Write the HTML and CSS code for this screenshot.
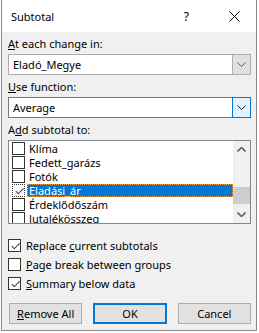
FILE: index.html
```html
<!DOCTYPE html>
<html lang="hu">
<head>
    <meta charset="UTF-8">
    <title>Subtotal</title>
    <link rel="stylesheet" href="styles.css">
</head>
<body>
    <div class="dialog">
        <div class="titlebar">
            <span class="title">Subtotal</span>
            <span class="help">?</span>
            <svg class="close" width="11" height="11" viewBox="0 0 11 11">
                <path d="M0.5 0.5 L10.5 10.5 M10.5 0.5 L0.5 10.5" stroke="#000" stroke-width="1" fill="none"/>
            </svg>
        </div>
        <div class="content">
            <div class="label"><u>A</u>t each change in:</div>
            <div class="combo disabled">
                <span class="value">Eladó_Megye</span>
                <span class="arrow">
                    <svg width="9" height="5" viewBox="0 0 9 5"><path d="M0.5 0.5 L4.5 4.5 L8.5 0.5" stroke="#555" fill="none"/></svg>
                </span>
            </div>

            <div class="label"><u>U</u>se function:</div>
            <div class="combo focused">
                <span class="value">Average</span>
                <span class="arrow">
                    <svg width="9" height="5" viewBox="0 0 9 5"><path d="M0.5 0.5 L4.5 4.5 L8.5 0.5" stroke="#222" fill="none"/></svg>
                </span>
            </div>

            <div class="label">A<u>d</u>d subtotal to:</div>
            <div class="listbox">
                <div class="rows">
                    <div class="row"><span class="box"></span><span class="txt">Klíma</span></div>
                    <div class="row"><span class="box"></span><span class="txt">Fedett_garázs</span></div>
                    <div class="row"><span class="box"></span><span class="txt">Fotók</span></div>
                    <div class="row"><span class="box checked dotted"></span><span class="txt sel">Eladási_ár</span></div>
                    <div class="row"><span class="box"></span><span class="txt">Érdeklődőszám</span></div>
                    <div class="row"><span class="box"></span><span class="txt">Jutalékösszeg</span></div>
                </div>
                <div class="scrollbar">
                    <svg class="sb-arrow" width="9" height="5" viewBox="0 0 9 5"><path d="M0.5 4.5 L4.5 0.5 L8.5 4.5" stroke="#606060" stroke-width="1.6" fill="none"/></svg>
                    <div class="track"><div class="thumb"></div></div>
                    <svg class="sb-arrow" width="9" height="5" viewBox="0 0 9 5"><path d="M0.5 0.5 L4.5 4.5 L8.5 0.5" stroke="#606060" stroke-width="1.6" fill="none"/></svg>
                </div>
            </div>

            <div class="options">
                <div class="option"><span class="box checked"></span><span>Replace <u>c</u>urrent subtotals</span></div>
                <div class="option"><span class="box"></span><span><u>P</u>age break between groups</span></div>
                <div class="option"><span class="box checked"></span><span><u>S</u>ummary below data</span></div>
            </div>

            <div class="buttons">
                <button class="btn"><u>R</u>emove All</button>
                <button class="btn default">OK</button>
                <button class="btn">Cancel</button>
            </div>
        </div>
    </div>
</body>
</html>
```

FILE: styles.css
```css
body {
    margin: 0;
    background: #ffffff;
    font-family: "Noto Sans", "Open Sans", sans-serif;
    font-size: 11px;
    color: #000;
}
.dialog {
    margin-left: 1px;
    width: 254px;
    height: 330px;
    border: 1px solid #8a8a8a;
    border-top: none;
    background: #f0f0f0;
    display: flex;
    flex-direction: column;
}
.titlebar {
    height: 32px;
    background: #ffffff;
    display: flex;
    align-items: center;
    padding-left: 9px;
    padding-right: 16px;
}
.title {
    flex: 1;
}
.help {
    font-size: 12px;
    margin-right: 40px;
}
.close {
    margin-top: 1px;
}
.content {
    padding: 4px 5px 0 6px;
    display: flex;
    flex-direction: column;
}
.label {
    height: 16px;
    line-height: 16px;
    margin-bottom: 2px;
}
.combo {
    height: 19px;
    border: 1px solid #7a7a7a;
    background: #fff;
    display: flex;
    align-items: stretch;
    margin-bottom: 4px;
}
.combo .value {
    flex: 1;
    line-height: 19px;
    padding-left: 4px;
}
.combo .arrow {
    width: 17px;
    display: flex;
    align-items: center;
    justify-content: center;
}
.combo.disabled {
    border-color: #adadad;
}
.combo.disabled .arrow {
    background: #e0e0e0;
    border-left: 1px solid #adadad;
}
.combo.focused .arrow {
    background: #e5f1fb;
    border: 1px solid #0078d7;
    margin: -1px -1px -1px 0;
}
.listbox {
    height: 82px;
    border: 1px solid #828790;
    background: #fff;
    display: flex;
    overflow: hidden;
}
.rows {
    flex: 1;
}
.row {
    height: 14px;
    display: flex;
    align-items: center;
    padding-left: 3px;
    white-space: nowrap;
}
.txt {
    line-height: 13px;
    height: 13px;
    padding-left: 2px;
}
.box {
    width: 11px;
    height: 11px;
    border: 1px solid #333;
    background: #fff;
    margin-right: 2px;
    flex-shrink: 0;
    position: relative;
}
.box.checked::after {
    content: "";
    position: absolute;
    left: 2px;
    top: 1px;
    width: 7px;
    height: 3px;
    border-left: 1px solid #333;
    border-bottom: 1px solid #333;
    transform: rotate(-45deg) translate(-1px, 2px);
}
.box.dotted {
    border: 1px dotted #333;
}
.sel {
    flex: 1;
    background: #0078d7;
    color: #fff;
    outline: 1px dotted #f0a040;
    outline-offset: -1px;
}
.scrollbar {
    width: 17px;
    background: #f0f0f0;
    display: flex;
    flex-direction: column;
    align-items: center;
}
.sb-arrow {
    margin: 6px 0;
}
.track {
    flex: 1;
    width: 100%;
    display: flex;
    flex-direction: column;
    justify-content: flex-end;
}
.thumb {
    height: 17px;
    background: #cdcdcd;
    margin-bottom: 2px;
}
.options {
    margin-top: 15px;
    display: flex;
    flex-direction: column;
    gap: 6px;
}
.option {
    display: flex;
    align-items: center;
    height: 13px;
    line-height: 13px;
    white-space: pre;
}
.option .box {
    margin-right: 5px;
}
.buttons {
    margin-top: 13px;
    display: flex;
    gap: 11px;
    padding-left: 1px;
}
.btn {
    width: 74px;
    height: 21px;
    font-family: inherit;
    font-size: 11px;
    background: #e1e1e1;
    border: 1px solid #adadad;
    padding: 0;
    color: #000;
}
.btn.default {
    border: 2px solid #0078d7;
}
```
